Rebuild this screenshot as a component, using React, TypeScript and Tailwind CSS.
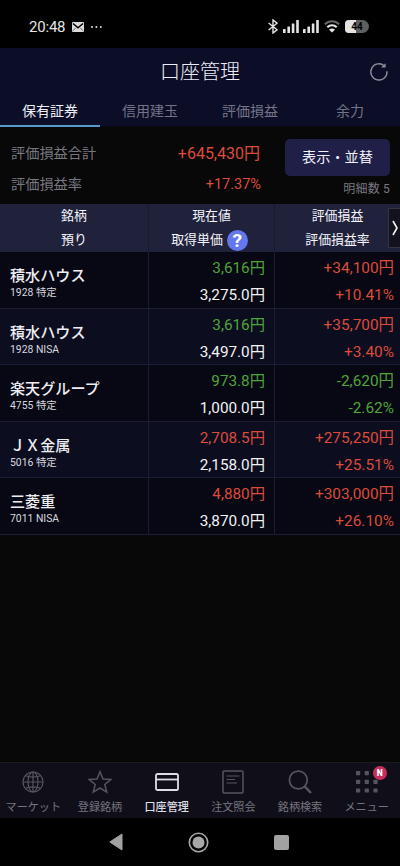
import type { ReactNode } from "react";

type Tone = "up" | "down";

interface Holding {
  name: string;
  detail: string;
  price: string;
  priceTone: Tone;
  cost: string;
  profit: string;
  rate: string;
  profitTone: Tone;
}

const holdings: Holding[] = [
  { name: "積水ハウス", detail: "1928 特定", price: "3,616円", priceTone: "down", cost: "3,275.0円", profit: "+34,100円", rate: "+10.41%", profitTone: "up" },
  { name: "積水ハウス", detail: "1928 NISA", price: "3,616円", priceTone: "down", cost: "3,497.0円", profit: "+35,700円", rate: "+3.40%", profitTone: "up" },
  { name: "楽天グループ", detail: "4755 特定", price: "973.8円", priceTone: "down", cost: "1,000.0円", profit: "-2,620円", rate: "-2.62%", profitTone: "down" },
  { name: "ＪＸ金属", detail: "5016 特定", price: "2,708.5円", priceTone: "up", cost: "2,158.0円", profit: "+275,250円", rate: "+25.51%", profitTone: "up" },
  { name: "三菱重", detail: "7011 NISA", price: "4,880円", priceTone: "up", cost: "3,870.0円", profit: "+303,000円", rate: "+26.10%", profitTone: "up" },
];

const toneClass: Record<Tone, string> = { up: "text-[#dd4b3a]", down: "text-[#4ea53a]" };

const tabs = ["保有証券", "信用建玉", "評価損益", "余力"];

function SignalIcon() {
  return (
    <svg width="16" height="13" viewBox="0 0 16 13" fill="#e4e4e4">
      <rect x="0" y="9" width="2.6" height="4" rx=".5" />
      <rect x="4.4" y="6.5" width="2.6" height="6.5" rx=".5" />
      <rect x="8.8" y="3.5" width="2.6" height="9.5" rx=".5" />
      <rect x="13.2" y="0" width="2.6" height="13" rx=".5" />
    </svg>
  );
}

function StatusBar() {
  return (
    <div className="flex h-12 items-center bg-black pr-[31px] pl-[29px] pt-[5px] text-[#e4e4e4]">
      <span className="pt-px text-[15px] leading-4 tracking-[-0.2px]">20:48</span>
      <svg className="ml-[7px]" width="12" height="10" viewBox="0 0 12 10">
        <rect width="12" height="10" rx="1" fill="#dcdcdc" />
        <path d="M1 1.5 L6 5.8 L11 1.5" fill="none" stroke="#000" strokeWidth="1.5" />
        <path d="M1 8.8 L3.6 6 M11 8.8 L8.4 6" stroke="#444" strokeWidth=".8" />
      </svg>
      <svg className="ml-[7px]" width="11" height="2" viewBox="0 0 11 2" fill="#dcdcdc">
        <circle cx="1" cy="1" r="1" />
        <circle cx="5.4" cy="1" r="1" />
        <circle cx="9.8" cy="1" r="1" />
      </svg>
      <div className="ml-auto flex items-center">
        <svg className="mr-[5px]" width="10" height="15" viewBox="0 0 10 15" fill="none" stroke="#e4e4e4" strokeWidth="1.4">
          <path d="M.6 4 L9 10.8 L5 14 V1 L9 4.2 L.6 11" />
        </svg>
        <SignalIcon />
        <span className="w-1" />
        <SignalIcon />
        <svg className="ml-[5px] mr-[5px]" width="16" height="13" viewBox="0 0 16 13" fill="none">
          <path d="M.8 4.3 C5 .2 11 .2 15.2 4.3" stroke="#666" strokeWidth="2" />
          <path d="M3.3 7.2 C6 4.5 10 4.5 12.7 7.2" stroke="#e4e4e4" strokeWidth="2" />
          <path d="M8 12.5 L5 9.7 C6.7 8.1 9.3 8.1 11 9.7 Z" fill="#e4e4e4" />
        </svg>
        <div className="flex h-[13px] w-[24px] items-center justify-center rounded-l-[4px] rounded-r-[7px] bg-[linear-gradient(90deg,#e4e4e4_46%,#606060_46%)] text-[10px] leading-none font-bold text-black">
          44
        </div>
      </div>
    </div>
  );
}

function Header() {
  return (
    <header className="h-[79px] bg-[#0c0d26]">
      <div className="grid h-12 grid-cols-[40px_1fr_40px] items-center">
        <span />
        <h1 className="text-center text-[20px] leading-6 font-light text-[#eeeef8]">口座管理</h1>
        <svg className="ml-[9px]" width="20" height="20" viewBox="0 0 20 20" fill="none" stroke="#8d8d9b" strokeWidth="1.4">
          <path d="M15.4 3.9 A8.1 8.1 0 1 0 18 9.2" />
          <path d="M12 5.6 H16.6 V1.2 Z" fill="#8d8d9b" stroke="none" />
        </svg>
      </div>
      <nav className="grid h-[31px] grid-cols-4 text-[14px]">
        {tabs.map((tab, i) => (
          <div
            key={tab}
            className={
              i === 0
                ? "border-b-2 border-[#5799cf] pt-[5px] text-center leading-5 text-[#f0f0fa]"
                : "border-b border-[#080914] pt-[5px] text-center leading-5 text-[#73748a]"
            }
          >
            {tab}
          </div>
        ))}
      </nav>
    </header>
  );
}

function Summary() {
  return (
    <section className="flex h-[77px] bg-[#080808] pr-[10px] pl-[11px]">
      <div className="w-[250px] pt-[11px] text-[14.2px]">
        <div className="flex h-[31px] items-center justify-between">
          <span className="text-[#777780]">評価損益合計</span>
          <span className="pr-px text-[16px] text-[#dd4b3a]">+645,430円</span>
        </div>
        <div className="flex h-[31px] items-center justify-between">
          <span className="text-[#777780]">評価損益率</span>
          <span className="text-[14.5px] text-[#dd4b3a]">+17.37%</span>
        </div>
      </div>
      <div className="ml-auto flex flex-col items-end pt-3">
        <button className="h-[37px] w-[105px] rounded-[5px] bg-[#1f1f47] text-[14.2px] text-[#f0f0fa]">表示・並替</button>
        <span className="mt-[6px] text-[12px] leading-[14px] tracking-[0.2px] text-[#777780]">明細数 5</span>
      </div>
    </section>
  );
}

const columns = "grid grid-cols-[149px_126px_125px]";

function HeadCell({ top, bottom, className }: { top: string; bottom: ReactNode; className: string }) {
  return (
    <div className={className}>
      <span className="flex h-6 items-center">{top}</span>
      <span className="flex h-6 items-center">{bottom}</span>
    </div>
  );
}

function TableHead() {
  return (
    <div className={`${columns} relative h-12 bg-[#20213a] text-[12.9px] text-[#f4f4fc]`}>
      <HeadCell className="flex flex-col items-center border-r border-[#191a30]" top="銘柄" bottom="預り" />
      <HeadCell
        className="flex flex-col items-center border-r border-[#191a30]"
        top="現在値"
        bottom={
          <span className="flex items-center gap-1 pr-1">
            取得単価
            <span className="flex size-[21px] items-center justify-center rounded-full bg-[#6478ee] text-[19px] leading-none font-bold text-white">?</span>
          </span>
        }
      />
      <HeadCell className="flex flex-col items-center" top="評価損益" bottom="評価損益率" />
      <div className="absolute top-[4px] right-0 flex h-10 w-3 items-center justify-center border border-r-0 border-[#33343f] bg-[#12131f]">
        <svg width="6" height="16" viewBox="0 0 6 16" fill="none" stroke="#f4f4f4" strokeWidth="1.6">
          <path d="M1 1 L5 8 L1 15" />
        </svg>
      </div>
    </div>
  );
}

function Row({ item, odd }: { item: Holding; odd: boolean }) {
  return (
    <div className={`${columns} h-[56.6px] border-b border-[#1b1d35] ${odd ? "bg-[#0c0e20]" : "bg-[#070813]"}`}>
      <div className="border-r border-[#1b1d35] pt-[14px] pl-[10px]">
        <div className="text-[15.1px] leading-5 font-medium text-[#ededf2]">{item.name}</div>
        <div className="text-[10.4px] leading-[14px] text-[#d8d8df]">{item.detail}</div>
      </div>
      <div className="border-r border-[#1b1d35] pt-[3px] pr-[9px] text-right text-[15.3px] leading-[27px]">
        <div className={toneClass[item.priceTone]}>{item.price}</div>
        <div className="text-[#f2f2f5]">{item.cost}</div>
      </div>
      <div className={`pt-[3px] pr-[6px] text-right text-[15.4px] leading-[27px] ${toneClass[item.profitTone]}`}>
        <div>{item.profit}</div>
        <div>{item.rate}</div>
      </div>
    </div>
  );
}

function NavItem({ label, active, children }: { label: string; active?: boolean; children: ReactNode }) {
  return (
    <div className={`flex flex-col items-center pt-[7px] ${active ? "text-[#dedee6]" : "text-[#55555f]"}`}>
      <div className="flex h-6 items-center justify-center">{children}</div>
      <span className={`mt-[6px] text-[11.1px] leading-4 whitespace-nowrap ${active ? "font-medium" : "text-[#74747d]"}`}>{label}</span>
    </div>
  );
}

function BottomNav() {
  return (
    <nav className="grid h-14 grid-cols-6 border-t border-[#1b1b22] bg-[#100f19]">
      <NavItem label="マーケット">
        <svg width="22" height="22" viewBox="0 0 22 22" fill="none" stroke="currentColor" strokeWidth="1.2">
          <circle cx="11" cy="11" r="10" />
          <ellipse cx="11" cy="11" rx="5" ry="10" />
          <path d="M11 1 V21 M1 11 H21 M3.5 4.8 Q11 7.6 18.5 4.8 M3.5 17.2 Q11 14.4 18.5 17.2" />
        </svg>
      </NavItem>
      <NavItem label="登録銘柄">
        <svg width="24" height="24" viewBox="0 0 24 24" fill="none" stroke="currentColor" strokeWidth="1.5">
          <path d="M12 1.7 L15 9 L22.7 9.5 L16.8 14.5 L18.8 22.2 L12 18 L5.2 22.2 L7.2 14.5 L1.3 9.5 L9 9 Z" />
        </svg>
      </NavItem>
      <NavItem label="口座管理" active>
        <svg width="24" height="18" viewBox="0 0 24 18" fill="none" stroke="currentColor" strokeWidth="1.8">
          <rect x="1" y="1" width="22" height="16" rx="1.6" />
          <path d="M1 6.5 H23" />
        </svg>
      </NavItem>
      <NavItem label="注文照会">
        <svg width="22" height="24" viewBox="0 0 22 24" fill="none" stroke="currentColor" strokeWidth="1.5">
          <rect x="1" y="1" width="20" height="22" rx="1" />
          <path d="M4.5 6 H17.5 M4.5 9.5 H13 M4.5 13 H15" strokeWidth="1.2" />
        </svg>
      </NavItem>
      <NavItem label="銘柄検索">
        <svg width="24" height="24" viewBox="0 0 24 24" fill="none" stroke="currentColor">
          <circle cx="10.3" cy="10" r="8.9" strokeWidth="1.7" />
          <path d="M16.6 16.3 L23 23" strokeWidth="2.5" />
        </svg>
      </NavItem>
      <NavItem label="メニュー">
        <div className="relative">
          <svg width="22" height="22" viewBox="0 0 22 22" fill="currentColor">
            {[0, 8.7, 17.4].map((y) => [0, 8.7, 17.4].map((x) => <rect key={`${x}-${y}`} x={x} y={y} width="4.2" height="4.2" rx=".6" />))}
          </svg>
          <span className="absolute -top-[5px] left-[17px] flex size-[14px] items-center justify-center rounded-full bg-[#c72e5c] text-[8.5px] leading-none font-black text-white">
            N
          </span>
        </div>
      </NavItem>
    </nav>
  );
}

export default function App() {
  return (
    <div className="flex h-[866px] w-[400px] flex-col overflow-hidden bg-[#080808] font-[Roboto,'Noto_Sans_CJK_JP',sans-serif]" lang="ja">
      <StatusBar />
      <Header />
      <Summary />
      <TableHead />
      <main className="flex-1">
        {holdings.map((item, i) => (
          <Row key={`${item.name}-${item.detail}`} item={item} odd={i % 2 === 1} />
        ))}
      </main>
      <BottomNav />
      <div className="flex h-12 items-center bg-black pl-[109px]">
        <svg width="14" height="18" viewBox="0 0 14 18" fill="#a2a2a2">
          <path d="M13 1 V17 L.8 9 Z" stroke="#a2a2a2" strokeLinejoin="round" />
        </svg>
        <svg className="ml-[65px]" width="21" height="21" viewBox="0 0 21 21">
          <circle cx="10.5" cy="10.5" r="9.2" fill="none" stroke="#a8a8a8" strokeWidth="1.6" />
          <circle cx="10.5" cy="10.5" r="6" fill="#a8a8a8" />
        </svg>
        <span className="ml-[65px] size-[15px] rounded-[2px] bg-[#a2a2a2]" />
      </div>
    </div>
  );
}
